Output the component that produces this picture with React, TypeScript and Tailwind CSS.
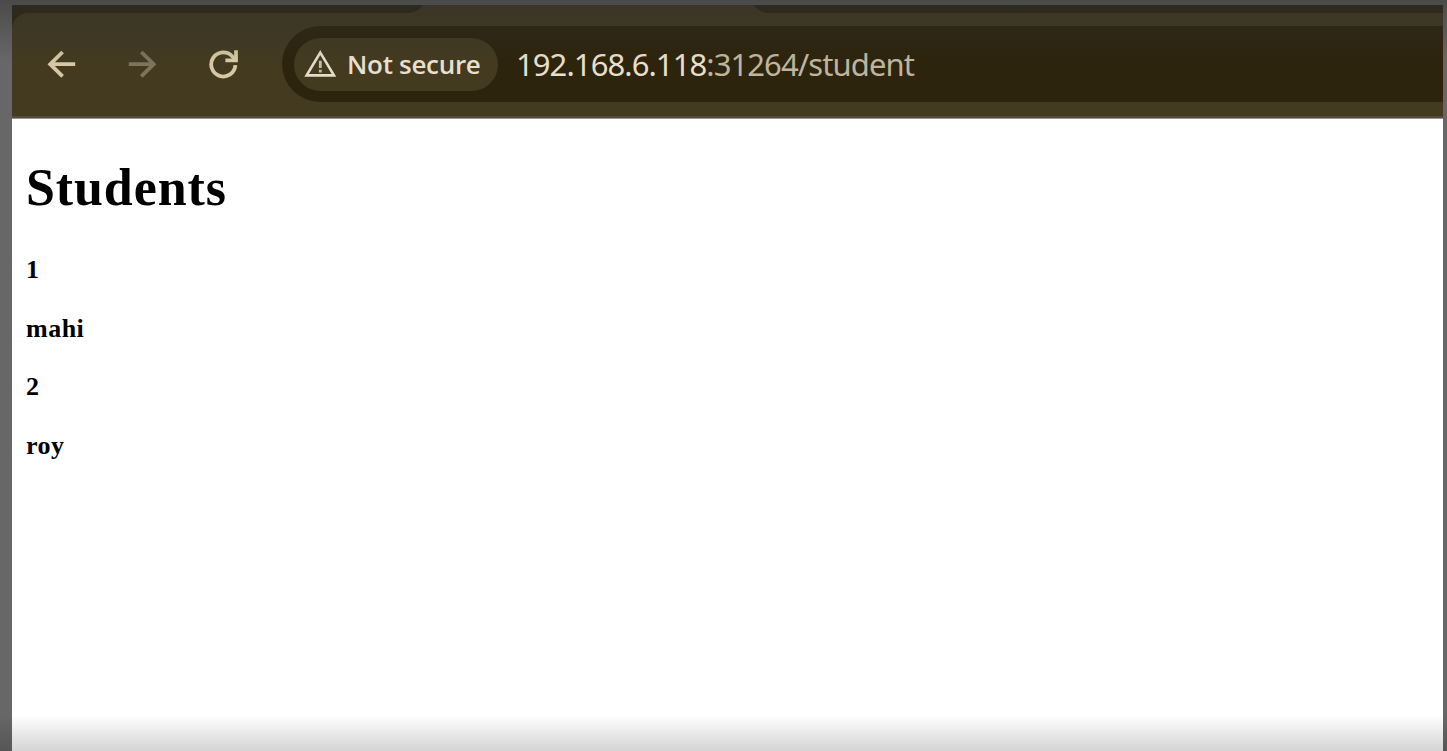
const rows = ['1', 'mahi', '2', 'roy'];

function BackIcon() {
  return (
    <svg className="w-[30px] h-[30px] shrink-0" viewBox="0 0 30 30" fill="none" stroke="#d5c8a3" strokeWidth="3.8">
      <path d="M28.2 15.2H4M15.6 3L3.2 15.2L15.6 27.4" />
    </svg>
  );
}

function ForwardIcon() {
  return (
    <svg className="w-[30px] h-[30px] shrink-0" viewBox="0 0 30 30" fill="none" stroke="#7e745d" strokeWidth="3.8">
      <path d="M0.8 15.2H25M13.3 3L25.7 15.2L13.3 27.4" />
    </svg>
  );
}

function ReloadIcon() {
  return (
    <svg className="w-[30px] h-[30px] shrink-0" viewBox="0 0 30 30" fill="none" stroke="#d5c8a3" strokeWidth="3.8">
      <path d="M26.4 16.2A12.1 12.1 0 1 1 23.2 7.2L26.5 10.6" />
      <path d="M27 1.2V11.4H16.4" />
    </svg>
  );
}

function WarningIcon() {
  return (
    <svg className="w-[34px] h-[28px] shrink-0" viewBox="0 0 34 28" fill="none">
      <path d="M17.3 2.6L31 25.4H3.6Z" stroke="#e5dccb" strokeWidth="2.6" />
      <path d="M17.3 10.8V18M17.3 19.8V22.4" stroke="#c8bea8" strokeWidth="2.8" />
    </svg>
  );
}

function TabStrip() {
  return (
    <svg className="block h-2 w-full shrink-0" viewBox="0 0 1431 8" preserveAspectRatio="none">
      <rect width="1431" height="8" fill="#2b260e" />
      <path d="M396 8C403 8 409 4 411 0H742C745 4 749 8 757 8Z" fill="#433a20" />
    </svg>
  );
}

export default function App() {
  return (
    <div className="relative flex h-[751px] w-[1447px] flex-col overflow-hidden bg-[#676767] pt-[5px] pr-1 pl-3">
      <TabStrip />
      <div className="shrink-0 bg-[#2b260e]">
        <div className="flex h-[103px] items-start rounded-tl-[16px] bg-[#433a20] pt-[13px] pl-[35px]">
          <div className="flex h-[76px] w-[235px] shrink-0 items-center gap-[51px]">
            <BackIcon />
            <ForwardIcon />
            <ReloadIcon />
          </div>
          <div className="flex h-[76px] flex-1 items-center rounded-l-full bg-[#2d240d] pl-3">
            <div className="flex h-[53px] w-[204px] shrink-0 items-center rounded-full bg-[#433a20] pl-[9px]">
              <WarningIcon />
              <span className="ml-[10px] font-['Open_Sans',sans-serif] text-[26px] leading-[36px] font-semibold tracking-[-0.3px] whitespace-nowrap text-[#e8dfce]">
                Not secure
              </span>
            </div>
            <div className="ml-[18px] font-['Noto_Sans','Open_Sans',sans-serif] text-[31px] leading-[42px] tracking-[-0.92px] whitespace-nowrap text-[#bfb59f]">
              <span className="text-[#e8dfcc]">192.168.6.118</span>:31264/student
            </div>
          </div>
        </div>
      </div>
      <div className="h-[3px] shrink-0 border-b border-[#9a958b] bg-[#554b3d]" />
      <main className="flex flex-1 flex-col bg-white pt-[39px] pl-[14px] font-['Liberation_Serif',serif] font-bold text-black">
        <h1 className="text-[52px] leading-[60px] tracking-[0.9px]">Students</h1>
        <div className="mt-[37px] flex flex-col gap-[28.6px]">
          {rows.map((row) => (
            <p key={row} className="text-[26px] leading-[30px] tracking-[0.5px]">
              {row}
            </p>
          ))}
        </div>
      </main>
      <div className="pointer-events-none absolute inset-x-0 top-0 h-[60px] bg-linear-to-b from-[#303030]/52 to-[#303030]/0" />
      <div className="pointer-events-none absolute inset-x-0 bottom-0 h-9 bg-linear-to-t from-black/17 to-transparent" />
    </div>
  );
}
